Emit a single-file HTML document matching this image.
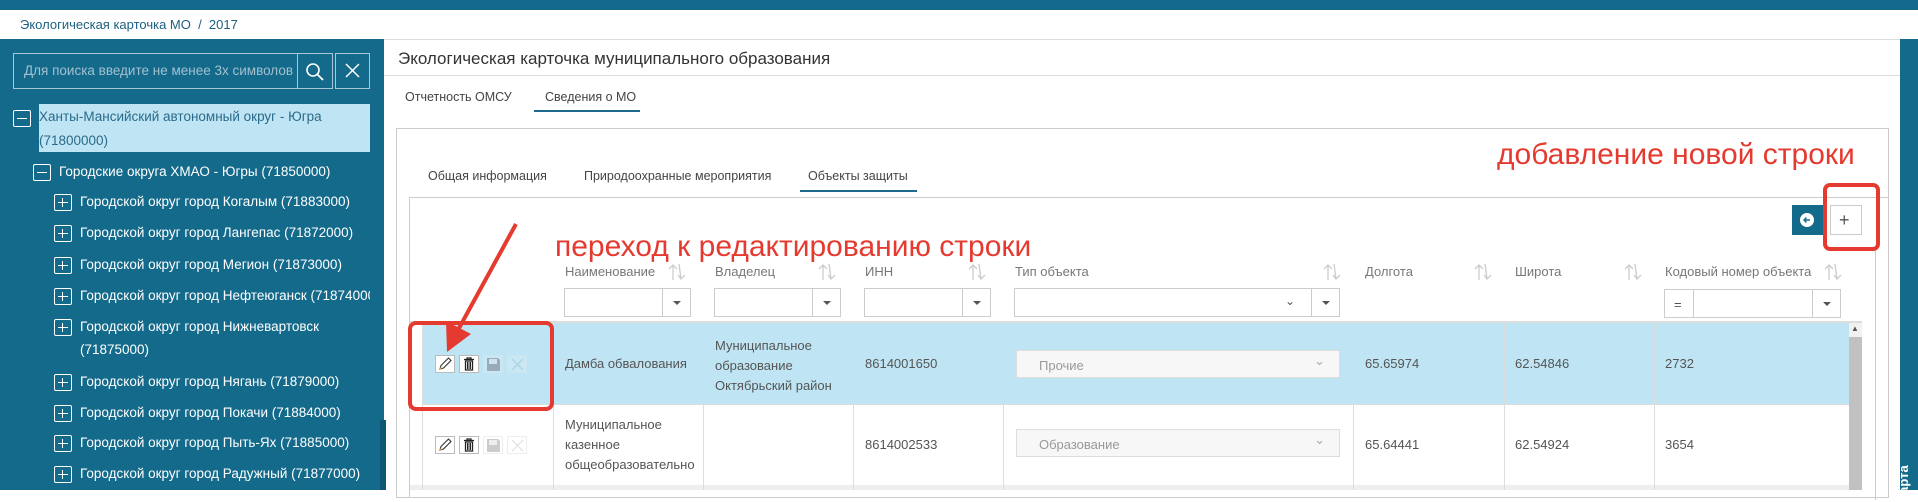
<!DOCTYPE html>
<html><head><meta charset="utf-8"><style>
*{box-sizing:border-box;margin:0;padding:0}
body{width:1918px;height:490px;overflow:hidden;position:relative;background:#fff;font-family:"Liberation Sans",sans-serif;font-size:13px;color:#555}
.a{position:absolute}
.t{position:absolute;white-space:nowrap;line-height:1}
.ico{position:absolute;width:18px;height:17px;border:1.5px solid #fff;border-radius:2px}
.ico:before{content:"";position:absolute;left:3px;right:3px;top:6.5px;height:1.5px;background:#fff}
.ico.p:after{content:"";position:absolute;top:3px;bottom:3px;left:6.75px;width:1.5px;background:#fff}
.tr{color:#fff;font-size:13.5px}
.hd{color:#777;font-size:13px}
.inp{position:absolute;height:29px;border:1px solid #ccc;background:#fff}
.dd{position:absolute;top:0;bottom:0;right:0;width:28px;border-left:1px solid #ccc}
.dd:after{content:"";position:absolute;left:10px;top:12px;border:4px solid transparent;border-top:4px solid #555}
.vl{position:absolute;width:1px;background:#ddd}
.sort{position:absolute;top:262px}
.cell{position:absolute;font-size:13px;color:#555;line-height:20px}
.ib{position:absolute;width:20px;height:18px;border:1px solid #bbb;background:#fff}
.sel{position:absolute;left:1016px;width:324px;height:28px;background:#f7f7f7;border:1px solid #ddd;color:#999;font-size:13px;padding:7px 0 0 22px}
.sel:after{content:"⌄";position:absolute;right:14px;top:2px;color:#aaa;font-size:13px}
.red{color:#e53a2f;font-size:30px}
</style></head><body>
<div class="a" style="left:0;top:0;width:1918px;height:10px;background:#136a8c"></div>
<div class="t" style="left:20px;top:18px;color:#1d5f80;font-size:13px">Экологическая карточка МО &nbsp;/&nbsp; 2017</div>
<div class="a" style="left:0;top:39px;width:1918px;height:1px;background:#ddd"></div>
<!-- left panel -->
<div class="a" style="left:0;top:39px;width:384px;height:451px;background:#136a8b"></div>
<div class="a" style="left:380px;top:420px;width:6px;height:70px;background:#0e5672"></div>
<div class="a" style="left:13px;top:53px;width:285px;height:36px;border:1px solid #a9c6d4"></div>
<div class="t" style="left:24px;top:64px;color:#a3c0cf;font-size:13.5px">Для поиска введите не менее 3х символов</div>
<div class="a" style="left:297px;top:53px;width:36px;height:36px;border:1px solid #a9c6d4"></div>
<svg class="a" style="left:304px;top:61px" width="22" height="22"><circle cx="9" cy="9" r="6" fill="none" stroke="#fff" stroke-width="1.6"/><line x1="13.5" y1="13.5" x2="19" y2="19" stroke="#fff" stroke-width="1.8"/></svg>
<div class="a" style="left:335px;top:53px;width:35px;height:36px;border:1px solid #a9c6d4"></div>
<svg class="a" style="left:344px;top:63px" width="18" height="16"><path d="M2 1L15 14M15 1L2 14" stroke="#fff" stroke-width="1.5"/></svg>
<div class="a" style="left:39px;top:104px;width:331px;height:48px;background:#bfe5f4"></div>
<div class="ico" style="left:13px;top:110px"></div>
<div class="t" style="left:39px;top:110px;color:#2a6a8a;font-size:13.5px">Ханты-Мансийский автономный округ - Югра</div>
<div class="t" style="left:39px;top:134px;color:#2a6a8a;font-size:13.5px">(71800000)</div>
<div class="ico" style="left:33px;top:164px"></div>
<div class="t tr" style="left:59px;top:165px">Городские округа ХМАО - Югры (71850000)</div>
<div class="ico p" style="left:54px;top:194px"></div><div class="t tr" style="left:80px;top:195px">Городской округ город Когалым (71883000)</div>
<div class="ico p" style="left:54px;top:225px"></div><div class="t tr" style="left:80px;top:226px">Городской округ город Лангепас (71872000)</div>
<div class="ico p" style="left:54px;top:257px"></div><div class="t tr" style="left:80px;top:258px">Городской округ город Мегион (71873000)</div>
<div class="ico p" style="left:54px;top:288px"></div><div class="t tr" style="left:80px;top:289px;width:290px;overflow:hidden">Городской округ город Нефтеюганск (71874000)</div>
<div class="ico p" style="left:54px;top:319px"></div><div class="t tr" style="left:80px;top:320px">Городской округ город Нижневартовск</div>
<div class="t tr" style="left:80px;top:343px">(71875000)</div>
<div class="ico p" style="left:54px;top:374px"></div><div class="t tr" style="left:80px;top:375px">Городской округ город Нягань (71879000)</div>
<div class="ico p" style="left:54px;top:405px"></div><div class="t tr" style="left:80px;top:406px">Городской округ город Покачи (71884000)</div>
<div class="ico p" style="left:54px;top:435px"></div><div class="t tr" style="left:80px;top:436px">Городской округ город Пыть-Ях (71885000)</div>
<div class="ico p" style="left:54px;top:466px"></div><div class="t tr" style="left:80px;top:467px">Городской округ город Радужный (71877000)</div>
<!-- right sidebar -->
<div class="a" style="left:1900px;top:39px;width:18px;height:451px;background:#136a8b"></div>
<div class="t" style="left:1897px;top:502px;color:#fff;font-size:13px;font-weight:bold;transform:rotate(-90deg);transform-origin:left top">Карта</div>
<!-- content -->
<div class="t" style="left:398px;top:50px;color:#333;font-size:17px">Экологическая карточка муниципального образования</div>
<div class="a" style="left:384px;top:75px;width:1516px;height:1px;background:#ddd"></div>
<div class="t" style="left:405px;top:91px;color:#444;font-size:12.5px">Отчетность ОМСУ</div>
<div class="t" style="left:545px;top:91px;color:#444;font-size:12.5px">Сведения о МО</div>
<div class="a" style="left:534px;top:110px;width:106px;height:2px;background:#1d6a8c"></div>
<div class="a" style="left:396px;top:128px;width:1493px;height:370px;border:1px solid #ccc"></div>
<div class="t" style="left:428px;top:170px;color:#444;font-size:12.5px">Общая информация</div>
<div class="t" style="left:584px;top:170px;color:#444;font-size:12.5px">Природоохранные мероприятия</div>
<div class="t" style="left:808px;top:170px;color:#444;font-size:12.5px">Объекты защиты</div>
<div class="a" style="left:800px;top:190px;width:117px;height:2px;background:#1d6a8c"></div>
<div class="a" style="left:409px;top:197px;width:1480px;height:1px;background:#ccc"></div>
<div class="a" style="left:409px;top:197px;width:1px;height:300px;background:#ccc"></div>
<div class="a" style="left:1875px;top:250px;width:1px;height:250px;background:#ccc"></div>
<!-- toolbar buttons -->
<div class="a" style="left:1792px;top:205px;width:31px;height:30px;background:#136a8b"></div>
<svg class="a" style="left:1799px;top:212px" width="16" height="16"><circle cx="8" cy="8" r="7" fill="#fff"/><path d="M11 8H5M7.5 5.5L5 8L7.5 10.5" stroke="#136a8b" stroke-width="1.4" fill="none"/></svg>
<div class="a" style="left:1830px;top:205px;width:32px;height:30px;border:1px solid #ccc"></div>
<div class="t" style="left:1839px;top:211px;color:#555;font-size:18px">+</div>
<!-- headers -->
<svg width="0" height="0" style="position:absolute"><defs><g id="srt"><path d="M6 18V3M2 7L6 3L10 7" stroke="#ccc" stroke-width="1.3" fill="none"/><path d="M12 2L14 17M11 13L14 17L18 13" stroke="#ccc" stroke-width="1.3" fill="none"/></g></defs></svg>
<div class="t hd" style="left:565px;top:265px">Наименование</div><svg class="sort" style="left:667px" width="20" height="20"><use href="#srt"/></svg>
<div class="t hd" style="left:715px;top:265px">Владелец</div><svg class="sort" style="left:817px" width="20" height="20"><use href="#srt"/></svg>
<div class="t hd" style="left:865px;top:265px">ИНН</div><svg class="sort" style="left:967px" width="20" height="20"><use href="#srt"/></svg>
<div class="t hd" style="left:1015px;top:265px">Тип объекта</div><svg class="sort" style="left:1322px" width="20" height="20"><use href="#srt"/></svg>
<div class="t hd" style="left:1365px;top:265px">Долгота</div><svg class="sort" style="left:1473px" width="20" height="20"><use href="#srt"/></svg>
<div class="t hd" style="left:1515px;top:265px">Широта</div><svg class="sort" style="left:1623px" width="20" height="20"><use href="#srt"/></svg>
<div class="t hd" style="left:1665px;top:265px">Кодовый номер объекта</div><svg class="sort" style="left:1823px" width="20" height="20"><use href="#srt"/></svg>
<div class="inp" style="left:564px;top:288px;width:127px"><div class="dd"></div></div>
<div class="inp" style="left:714px;top:288px;width:127px"><div class="dd"></div></div>
<div class="inp" style="left:864px;top:288px;width:127px"><div class="dd"></div></div>
<div class="inp" style="left:1014px;top:288px;width:326px"><div class="dd"></div><div class="t" style="right:44px;top:6px;color:#555;font-size:12px">⌄</div></div>
<div class="inp" style="left:1664px;top:289px;width:177px"><div class="dd"></div><div class="a" style="left:28px;top:0;bottom:0;width:1px;background:#ccc"></div><div class="t" style="left:9px;top:8px;color:#555">=</div></div>
<!-- rows -->
<div class="a" style="left:410px;top:321px;width:1452px;height:2px;background:#ddd"></div>
<div class="a" style="left:423px;top:323px;width:1426px;height:81px;background:#bfe5f4"></div>
<div class="a" style="left:423px;top:404px;width:1426px;height:1px;background:#ddd"></div>
<div class="a" style="left:410px;top:485px;width:1439px;height:5px;background:#eee"></div>
<div class="vl" style="left:422px;top:323px;height:167px"></div>
<div class="vl" style="left:553px;top:323px;height:167px"></div>
<div class="vl" style="left:703px;top:323px;height:167px"></div>
<div class="vl" style="left:853px;top:323px;height:167px"></div>
<div class="vl" style="left:1003px;top:323px;height:167px"></div>
<div class="vl" style="left:1353px;top:323px;height:167px"></div>
<div class="vl" style="left:1504px;top:323px;height:167px"></div>
<div class="vl" style="left:1654px;top:323px;height:167px"></div>
<div class="a" style="left:1849px;top:323px;width:13px;height:167px;background:#c1c1c1"></div>
<div class="a" style="left:1849px;top:323px;width:13px;height:14px;background:#f1f1f1"></div>
<div class="t" style="left:1851px;top:325px;color:#555;font-size:8px">▲</div>
<!-- row 1 -->
<div class="ib" style="left:435px;top:355px"></div>
<svg class="a" style="left:437px;top:356px" width="16" height="16"><path d="M3 13L4 9.5L11.5 2L14 4.5L6.5 12Z" fill="none" stroke="#333" stroke-width="1.1"/><path d="M3 13L4.2 11.8" stroke="#e59b2f" stroke-width="1.5"/></svg>
<div class="ib" style="left:459px;top:355px"></div>
<svg class="a" style="left:461px;top:356px" width="16" height="16"><path d="M3 3.5H13M6 3.5V2H10V3.5M4.5 5H11.5V14H4.5Z" fill="none" stroke="#222" stroke-width="1.3"/><path d="M6.5 6V13M8 6V13M9.5 6V13" stroke="#222"/></svg>
<div class="ib" style="left:483px;top:355px;border-color:#cfe5ee;background:#c8e8f5"></div>
<svg class="a" style="left:486px;top:357px" width="15" height="15"><path d="M1 1H12L14 3V14H1Z" fill="#9ab"/><rect x="3" y="2" width="8" height="5" fill="#cfe3ec"/></svg>
<div class="ib" style="left:507px;top:355px;border-color:#cfe5ee;background:#c8e8f5"></div>
<svg class="a" style="left:510px;top:357px" width="15" height="15"><path d="M2 2L13 13M13 2L2 13" stroke="#aacbd8" stroke-width="1"/></svg>
<div class="cell" style="left:565px;top:354px">Дамба обвалования</div>
<div class="cell" style="left:715px;top:336px">Муниципальное<br>образование<br>Октябрьский район</div>
<div class="cell" style="left:865px;top:354px">8614001650</div>
<div class="sel" style="top:350px">Прочие</div>
<div class="cell" style="left:1365px;top:354px">65.65974</div>
<div class="cell" style="left:1515px;top:354px">62.54846</div>
<div class="cell" style="left:1665px;top:354px">2732</div>
<!-- row 2 -->
<div class="ib" style="left:435px;top:436px"></div>
<svg class="a" style="left:437px;top:437px" width="16" height="16"><path d="M3 13L4 9.5L11.5 2L14 4.5L6.5 12Z" fill="none" stroke="#333" stroke-width="1.1"/><path d="M3 13L4.2 11.8" stroke="#e59b2f" stroke-width="1.5"/></svg>
<div class="ib" style="left:459px;top:436px"></div>
<svg class="a" style="left:461px;top:437px" width="16" height="16"><path d="M3 3.5H13M6 3.5V2H10V3.5M4.5 5H11.5V14H4.5Z" fill="none" stroke="#222" stroke-width="1.3"/><path d="M6.5 6V13M8 6V13M9.5 6V13" stroke="#222"/></svg>
<div class="ib" style="left:483px;top:436px;border-color:#eee;background:none"></div>
<svg class="a" style="left:486px;top:438px" width="15" height="15"><path d="M1 1H12L14 3V14H1Z" fill="#ccc"/><rect x="3" y="2" width="8" height="5" fill="#eee"/></svg>
<div class="ib" style="left:507px;top:436px;border-color:#eee;background:none"></div>
<svg class="a" style="left:510px;top:438px" width="15" height="15"><path d="M2 2L13 13M13 2L2 13" stroke="#ddd" stroke-width="1"/></svg>
<div class="cell" style="left:565px;top:415px">Муниципальное<br>казенное<br>общеобразовательно</div>
<div class="cell" style="left:865px;top:435px">8614002533</div>
<div class="sel" style="top:429px">Образование</div>
<div class="cell" style="left:1365px;top:435px">65.64441</div>
<div class="cell" style="left:1515px;top:435px">62.54924</div>
<div class="cell" style="left:1665px;top:435px">3654</div>
<!-- annotations -->
<div class="t red" style="left:1497px;top:140px">добавление новой строки</div>
<div class="t red" style="left:555px;top:232px">переход к редактированию строки</div>
<svg class="a" style="left:0;top:0;overflow:visible" width="1918" height="490">
<rect x="410" y="323" width="142" height="86" rx="6" fill="none" stroke="#e53a2f" stroke-width="4"/>
<rect x="1825" y="185" width="53" height="64" rx="5" fill="none" stroke="#e53a2f" stroke-width="4"/>
<line x1="516" y1="224" x2="458" y2="330" stroke="#e53a2f" stroke-width="4"/>
<path d="M447 352L446 321L471 334Z" fill="#e53a2f"/>
</svg>
</body></html>
